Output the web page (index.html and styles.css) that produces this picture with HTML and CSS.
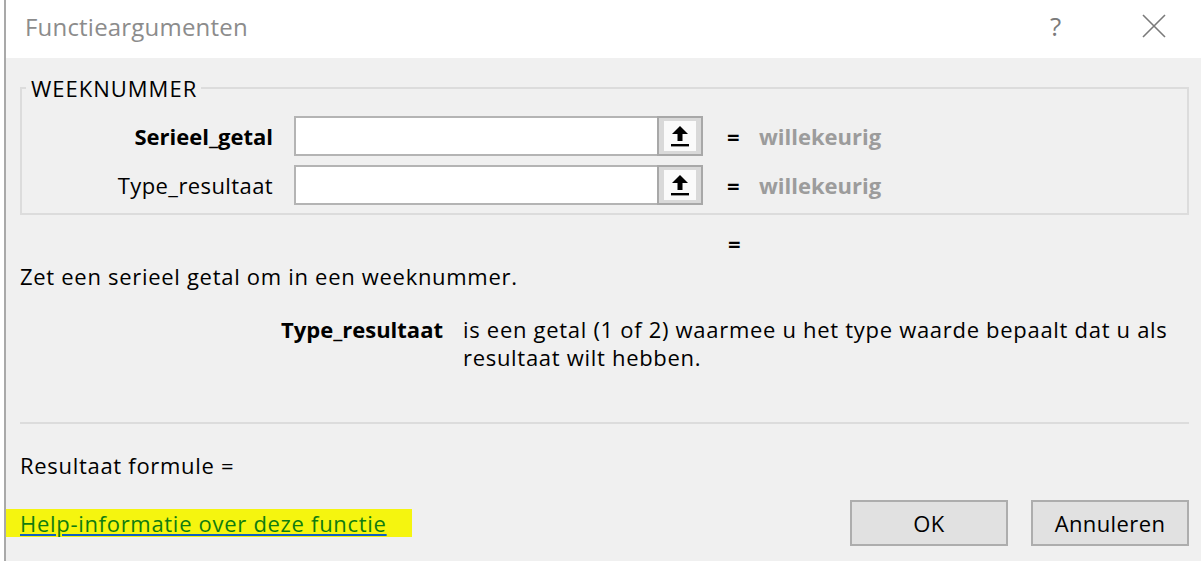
FILE: index.html
```html
<!DOCTYPE html>
<html>
<head>
<meta charset="utf-8">
<link rel="stylesheet" href="styles.css">
</head>
<body>
<div class="window">
  <div class="titlebar">
    <div class="title">Functieargumenten</div>
    <div class="tb-btn help">?</div>
    <div class="tb-btn close">
      <svg width="24" height="24" viewBox="0 0 24 24"><path d="M1 1 L23 23 M23 1 L1 23" stroke="#7a7a7a" stroke-width="1.6" fill="none"/></svg>
    </div>
  </div>
  <div class="content">
    <fieldset class="group">
      <legend>WEEKNUMMER</legend>
      <div class="arg-row">
        <div class="arg-label bold">Serieel_getal</div>
        <div class="arg-input"><div class="field"></div><div class="ref-btn"><span class="ref-inner"><svg width="20" height="22" viewBox="0 0 20 22"><path d="M10 1 L2 9 L7.5 9 L7.5 16 L12.5 16 L12.5 9 L18 9 Z" fill="#000"/><rect x="1" y="19" width="18" height="2.4" fill="#000"/></svg></span></div></div>
        <div class="eq">=</div>
        <div class="val">willekeurig</div>
      </div>
      <div class="arg-row">
        <div class="arg-label">Type_resultaat</div>
        <div class="arg-input"><div class="field"></div><div class="ref-btn"><span class="ref-inner"><svg width="20" height="22" viewBox="0 0 20 22"><path d="M10 1 L2 9 L7.5 9 L7.5 16 L12.5 16 L12.5 9 L18 9 Z" fill="#000"/><rect x="1" y="19" width="18" height="2.4" fill="#000"/></svg></span></div></div>
        <div class="eq">=</div>
        <div class="val">willekeurig</div>
      </div>
    </fieldset>
    <div class="result-eq"><span class="eq">=</span></div>
    <div class="summary">Zet een serieel getal om in een weeknummer.</div>
    <div class="desc">
      <div class="desc-label">Type_resultaat</div>
      <div class="desc-text">is een getal (1 of 2) waarmee u het type waarde bepaalt dat u als resultaat wilt hebben.</div>
    </div>
    <div class="sep"></div>
    <div class="formula">Resultaat formule =</div>
    <div class="bottom">
      <a class="help-link" href="#">Help-informatie over deze functie</a>
      <div class="buttons">
        <button class="btn">OK</button>
        <button class="btn">Annuleren</button>
      </div>
    </div>
  </div>
</div>
</body>
</html>
```

FILE: styles.css
```css
html, body {
  margin: 0;
  padding: 0;
}
body {
  width: 1201px;
  height: 561px;
  overflow: hidden;
  background: #ffffff;
  font-family: "Open Sans", "Noto Sans", sans-serif;
  font-size: 22px;
  letter-spacing: 0.7px;
  color: #000;
}
.window {
  margin-left: 4px;
  border-left: 2px solid #a9a9a9;
  height: 561px;
  background: #f0f0f0;
  display: flex;
  flex-direction: column;
}
.titlebar {
  height: 58px;
  background: #fff;
  display: flex;
  align-items: center;
  flex-shrink: 0;
}
.title {
  flex: 1;
  padding-left: 19px;
  font-size: 24px;
  letter-spacing: 0.2px;
  color: #8c8c8c;
  padding-bottom: 6px;
}
.tb-btn {
  display: flex;
  align-items: center;
  justify-content: center;
  color: #7a7a7a;
  padding-bottom: 6px;
}
.help {
  font-size: 26px;
  width: 20px;
  margin-right: 76px;
}
.close {
  width: 24px;
  margin-right: 35px;
}
.content {
  padding: 0 12px 0 14px;
  display: flex;
  flex-direction: column;
}
.group {
  margin: 18px 0 0 0;
  padding: 0 0 8px 0;
  border: 2px solid #dcdcdc;
}
.group legend {
  margin-left: 4px;
  padding: 0 4px 0 5px;
  font-size: 22px;
  line-height: 24px;
  letter-spacing: 1px;
}
.arg-row {
  display: flex;
  align-items: center;
  height: 40px;
  margin-top: 16px;
}
.arg-row + .arg-row {
  margin-top: 9px;
}
.arg-label {
  width: 251px;
  text-align: right;
  letter-spacing: 0.4px;
}
.bold {
  font-weight: bold;
  letter-spacing: 0;
}
.arg-input {
  margin-left: 21px;
  display: flex;
  height: 40px;
}
.field {
  width: 361px;
  height: 36px;
  background: #fff;
  border: 2px solid #b4b4b4;
  border-right: none;
}
.ref-btn {
  width: 42px;
  height: 36px;
  border: 2px solid #a8a8a8;
  background: #d9d9d9;
  display: flex;
  align-items: center;
  justify-content: center;
}
.ref-inner {
  width: 32px;
  height: 30px;
  background: #fafafa;
  display: flex;
  align-items: center;
  justify-content: center;
}
.eq {
  margin-left: 24px;
  width: 10px;
  font-weight: bold;
}
.val {
  margin-left: 22px;
  color: #9c9c9c;
  font-weight: bold;
  letter-spacing: 0;
}
.result-eq {
  height: 32px;
  margin-top: 12px;
  display: flex;
  align-items: center;
  padding-left: 683px;
}
.result-eq .eq {
  margin-left: 25px;
}
.summary {
  margin-top: 2px;
  height: 30px;
  line-height: 30px;
}
.desc {
  display: flex;
  margin-top: 24px;
  line-height: 28px;
  height: 107px;
}
.desc-label {
  width: 423px;
  text-align: right;
  font-weight: bold;
  letter-spacing: 0;
  flex-shrink: 0;
}
.desc-text {
  margin-left: 20px;
  width: 725px;
}
.sep {
  height: 2px;
  background: #dcdcdc;
}
.formula {
  margin-top: 26px;
  height: 30px;
  line-height: 30px;
}
.bottom {
  display: flex;
  justify-content: space-between;
  align-items: center;
  margin-top: 20px;
}
.help-link {
  color: #107c10;
  background: #f5f50f;
  text-decoration: underline;
  text-decoration-color: #1060c0;
  margin-left: -14px;
  padding: 0 25px 0 14px;
  line-height: 28px;
}
.buttons {
  display: flex;
  gap: 23px;
}
.btn {
  width: 158px;
  height: 46px;
  border: 2px solid #adadad;
  background: #e1e1e1;
  font-family: "Open Sans", "Noto Sans", sans-serif;
  font-size: 22px;
  letter-spacing: 0.4px;
  color: #000;
  padding: 0;
}
```
